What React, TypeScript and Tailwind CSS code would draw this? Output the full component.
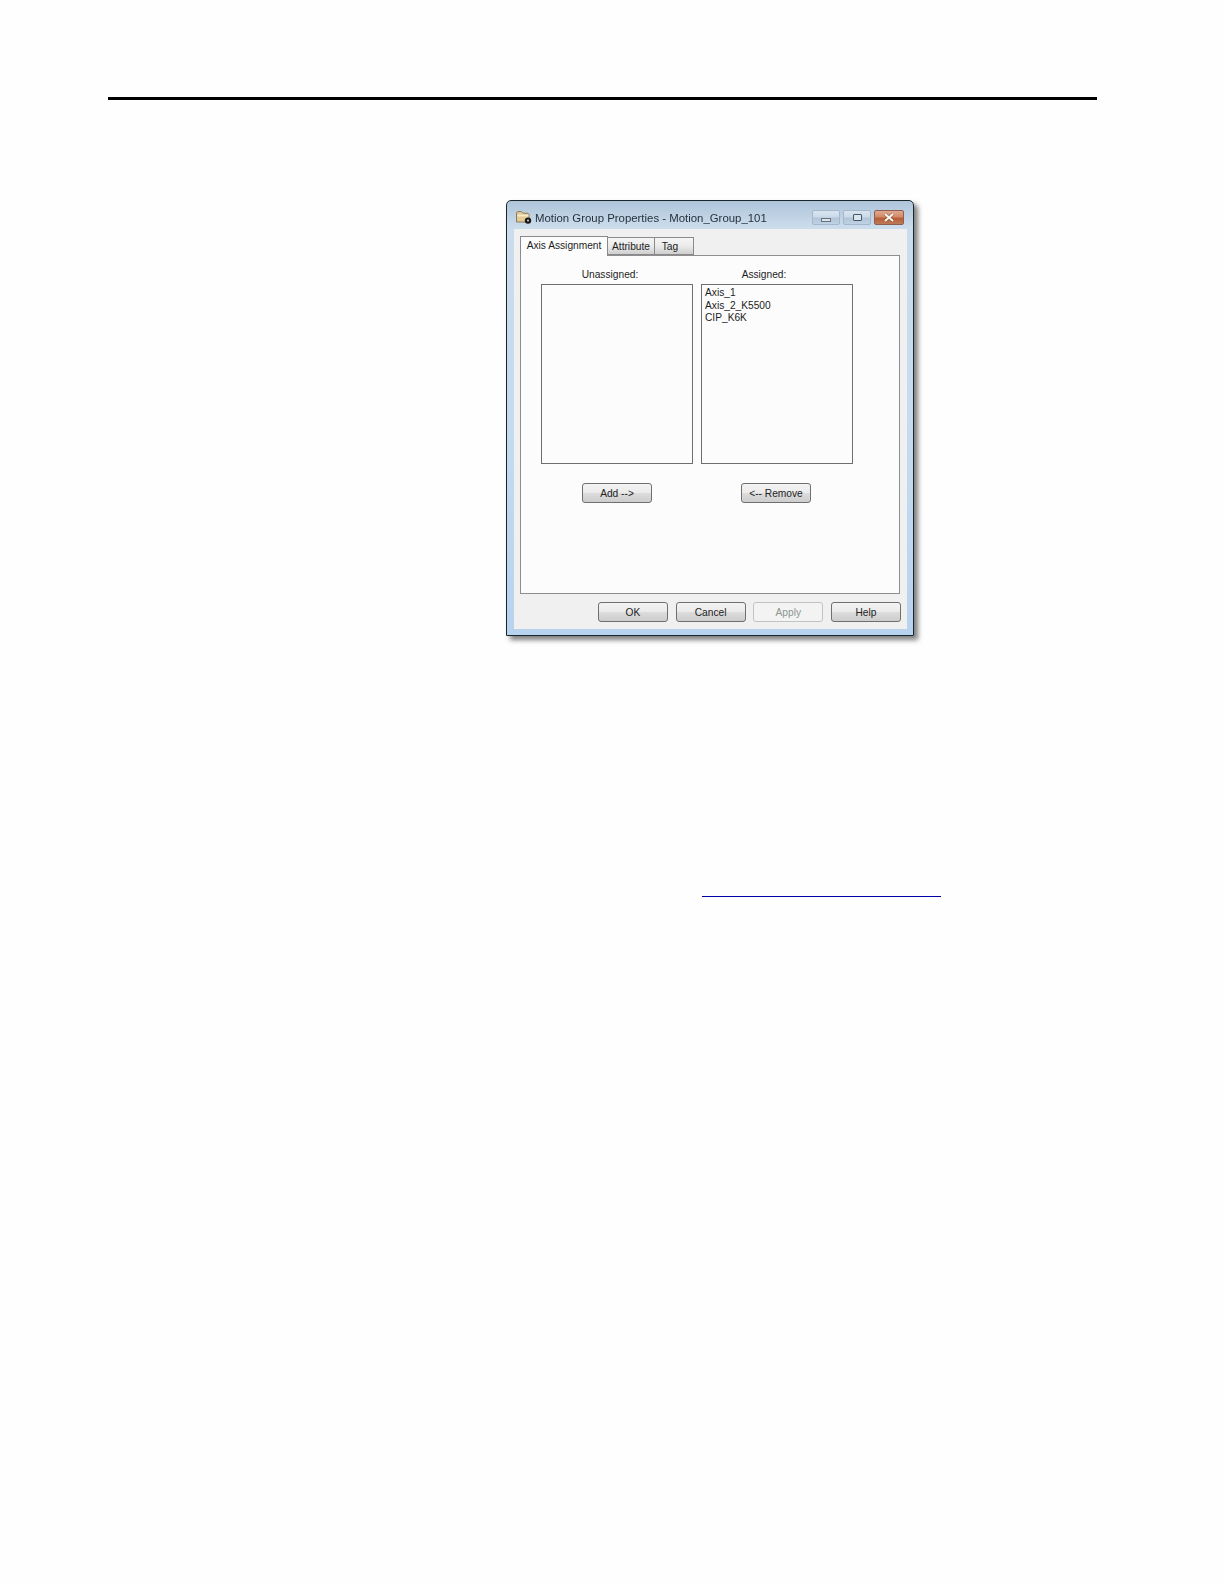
const font = "font-['Liberation_Sans',Arial,sans-serif]";
const btnFace =
  "bg-[linear-gradient(180deg,#f3f3f3_0%,#ebebeb_48%,#dcdcdc_52%,#cdcdcd_100%)]";

function Btn({ label, disabled = false }: { label: string; disabled?: boolean }) {
  return (
    <div
      className={`w-[70px] h-[20px] shrink-0 rounded-[3px] border flex items-center justify-center pt-[2px] text-[10.2px] leading-none ${
        disabled
          ? "border-[#bfc3c4] bg-[#f3f3f3] text-[#8a9491]"
          : `border-[#6f6f6f] ${btnFace} text-[#222222]`
      }`}
    >
      {label}
    </div>
  );
}

function WinBtn({ kind }: { kind: "min" | "max" | "close" }) {
  if (kind === "close") {
    return (
      <div className="w-[30px] h-[15px] rounded-[2px] border border-[#8d5f50] bg-[linear-gradient(180deg,#e0a88f_0%,#d48a68_45%,#b75c36_55%,#bd7a58_100%)] flex items-center justify-center">
        <svg width="14" height="9" viewBox="0 0 14 9">
          <path d="M3 1 L11 8 M11 1 L3 8" stroke="#4a2a1e" strokeWidth="3.4" opacity="0.45" />
          <path d="M3 1 L11 8 M11 1 L3 8" stroke="#f7f4ee" strokeWidth="2.2" />
        </svg>
      </div>
    );
  }
  return (
    <div className="w-[28px] h-[15px] rounded-[2px] border border-[#a3b8cc] bg-[linear-gradient(180deg,#d9e5f0_0%,#ccdae8_45%,#b3c6d9_55%,#bfd2e4_100%)] flex items-center justify-center">
      {kind === "min" ? (
        <div className="w-[10px] h-[4px] mt-[4px] border border-[#65727f] bg-[#dbe4ec]" />
      ) : (
        <div className="w-[9px] h-[7px] rounded-[1px] border-[1.5px] border-[#44566c] bg-[#dbe5ee]" />
      )}
    </div>
  );
}

function Tab({ label, w, pad }: { label: string; w: string; pad: string }) {
  return (
    <div
      className={`${w} ${pad} h-[18px] border border-l-0 border-[#8a8a8a] bg-[linear-gradient(180deg,#f5f5f5_0%,#ebebeb_50%,#cfcfcf_100%)] flex items-center justify-center pt-[3px] leading-none text-[#1c1c1c]`}
    >
      {label}
    </div>
  );
}

export default function App() {
  return (
    <div className={`${font} w-[1224px] h-[1584px] bg-[#fefefe] overflow-hidden flex flex-col`}>
      <div className="ml-[108px] mt-[97px] w-[989px] h-[3px] shrink-0 bg-black" />

      {/* dialog */}
      <div className="ml-[506px] mt-[100px] w-[408px] h-[436px] shrink-0 rounded-t-[5px] border border-[#1a242c] bg-[linear-gradient(180deg,#aec4d9_0%,#cbdcec_6%,#c6dbef_50%,#b8d3ee_100%)] shadow-[4px_4px_5px_rgba(0,0,0,0.5)] flex flex-col text-[#1c1c1c] text-[10.2px] blur-[0.3px]">
        <div className="h-[28px] shrink-0 pt-[9px] pl-[9px] pr-[9px]">
          <div className="h-[15px] flex items-center">
            <svg width="16" height="13" viewBox="0 0 16 13" className="shrink-0">
              <path d="M0.5 2 L1.5 0.6 H5.5 L7 2.2 H12 L13 3.2 V11 H0.5 Z" fill="#e3cb97" stroke="#8a7a5c" strokeWidth="1" />
              <path d="M1.2 4.6 H12.4" stroke="#f6eccd" strokeWidth="1.6" />
              <circle cx="12" cy="9.6" r="3.2" fill="#191919" />
              <circle cx="12" cy="9.6" r="1" fill="#dcdcdc" />
            </svg>
            <span className="ml-[3px] pt-[2px] text-[11.4px] text-[#27313c] leading-none">Motion Group Properties - Motion_Group_101</span>
            <div className="ml-auto flex gap-[3px]">
              <WinBtn kind="min" />
              <WinBtn kind="max" />
              <WinBtn kind="close" />
            </div>
          </div>
        </div>

        <div className="ml-[7px] mr-[6px] h-[400px] shrink-0 bg-[#f0f0f0] flex flex-col pl-[6px] pr-[6px]">
          {/* tabs */}
          <div className="h-[19px] mt-[7px] shrink-0 flex items-end relative z-10">
            <div className="w-[88px] h-[20px] mb-[-1px] border border-b-0 border-[#8a8a8a] bg-[#fcfcfc] flex items-center justify-center leading-none">
              Axis Assignment
            </div>
            <Tab label="Attribute" w="w-[47px]" pad="pr-0" />
            <Tab label="Tag" w="w-[39px]" pad="pr-[8px]" />
          </div>

          {/* panel */}
          <div className="w-[380px] h-[339px] shrink-0 border border-[#8e8e8e] bg-[#fcfcfc] pl-[20px] pt-[11px]">
            <div className="flex gap-[8px]">
              <div className="w-[152px] flex flex-col">
                <div className="h-[17px] pr-[14px] text-center leading-[16px]">Unassigned:</div>
                <div className="h-[180px] border border-[#6f6f6f] bg-[#fcfcfc]" />
                <div className="mt-[19px] flex justify-center">
                  <Btn label="Add -->" />
                </div>
              </div>
              <div className="w-[152px] flex flex-col">
                <div className="h-[17px] pr-[26px] text-center leading-[16px]">Assigned:</div>
                <div className="h-[180px] border border-[#6f6f6f] bg-[#fcfcfc] pl-[3px] pt-[2px] leading-[12.6px]">
                  <div>Axis_1</div>
                  <div>Axis_2_K5500</div>
                  <div>CIP_K6K</div>
                </div>
                <div className="mt-[19px] pr-[2px] flex justify-center">
                  <Btn label="<-- Remove" />
                </div>
              </div>
            </div>
          </div>

          {/* footer */}
          <div className="mt-[8px] flex justify-end gap-[7.7px]">
            <Btn label="OK" />
            <Btn label="Cancel" />
            <Btn label="Apply" disabled />
            <Btn label="Help" />
          </div>
        </div>
      </div>

      <div className="ml-[702px] mt-[260px] w-[239px] h-[1px] shrink-0 bg-[#0000a8]" />
    </div>
  );
}
